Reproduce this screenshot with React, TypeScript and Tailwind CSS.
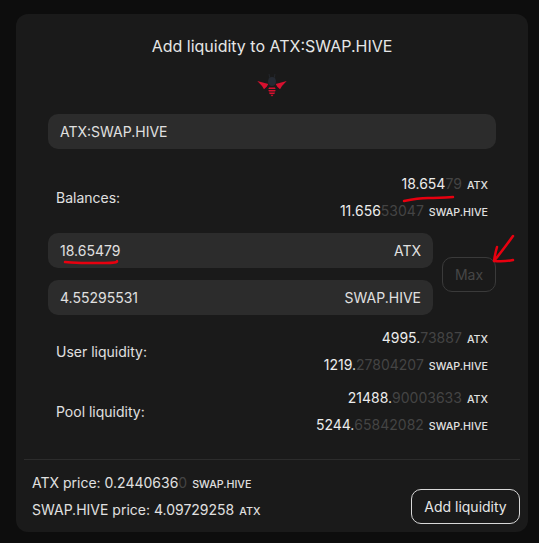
import type { ReactNode } from 'react';

const FONT = "font-['Inter','Noto_Sans',sans-serif]";

function Amount({ strong, faint, token }: { strong: string; faint: string; token: string }) {
  return (
    <div className="flex items-baseline justify-end h-[27px] leading-[27px]">
      <span className="text-[14px] text-[#ececec]">{strong}</span>
      <span className="text-[14px] text-[#444444]">{faint}</span>
      <span className="ml-[5px] text-[10.7px] font-medium text-[#e0e0e0]">{token}</span>
    </div>
  );
}

function StatRow({ label, children, className }: { label: string; children: ReactNode; className?: string }) {
  return (
    <div className={`flex items-center justify-between px-2 ${className ?? ''}`}>
      <span className="text-[14px] text-[#e0e0e0]">{label}</span>
      <div className="flex flex-col">{children}</div>
    </div>
  );
}

function Field({ value, token }: { value: string; token?: string }) {
  return (
    <div className="flex h-[35px] items-center justify-between rounded-[10px] bg-[#2c2c2c] px-3 text-[14px] text-[#e0e0e0]">
      <span>{value}</span>
      {token && <span>{token}</span>}
    </div>
  );
}

function Bee() {
  return (
    <svg width="32" height="27" viewBox="0 0 32 27" className="block">
      <path d="M14 8 L13 3 M18 8 L19 3" stroke="#23262b" strokeWidth="1" />
      <ellipse cx="16" cy="10.5" rx="4" ry="4.5" fill="#252a33" />
      <path d="M1.3 10 L12.3 13 L10.7 15.7 L8 18.3 L6 15 Z" fill="#d8102f" />
      <path d="M30.7 10 L19.7 13 L21.3 15.7 L24 18.3 L26 15 Z" fill="#d8102f" />
      <path d="M13 16.5 H19 L19.6 18 H12.4 Z" fill="#d8102f" />
      <path d="M12.4 19 H19.6 L19.2 20.5 H12.8 Z" fill="#d8102f" />
      <path d="M13 21.5 H19 L18.4 23 H13.6 Z" fill="#d8102f" />
      <path d="M14.5 23.8 H17.5 L16 25.5 Z" fill="#d8102f" />
    </svg>
  );
}

export default function App() {
  return (
    <div className={`relative h-[543px] w-[539px] overflow-hidden bg-[#0d0d0d] pl-4 pr-[11px] pt-[14px] ${FONT}`}>
      <div className="h-[518px] rounded-[12px] bg-[#1a1a1a]">
        <div className="px-8">
          <h1 className="pt-[21px] text-center text-[16px] leading-[22px] text-[#e6e6e6]">
            Add liquidity to ATX:SWAP.HIVE
          </h1>
          <div className="mt-[14px] flex justify-center">
            <Bee />
          </div>
          <div className="mt-[16px]">
            <Field value="ATX:SWAP.HIVE" />
          </div>

          <StatRow label="Balances:" className="mt-[21px]">
            <Amount strong="18.654" faint="79" token="ATX" />
            <Amount strong="11.656" faint="53047" token="SWAP.HIVE" />
          </StatRow>

          <div className="mt-[9px] flex items-center gap-[9px]">
            <div className="flex flex-1 flex-col gap-[12px]">
              <Field value="18.65479" token="ATX" />
              <Field value="4.55295531" token="SWAP.HIVE" />
            </div>
            <button className="h-[35px] w-[54px] rounded-[10px] border border-[#3a3a3a] text-[14px] text-[#464646]">
              Max
            </button>
          </div>

          <StatRow label="User liquidity:" className="mt-[9px]">
            <Amount strong="4995." faint="73887" token="ATX" />
            <Amount strong="1219." faint="27804207" token="SWAP.HIVE" />
          </StatRow>
          <StatRow label="Pool liquidity:" className="mt-[6px]">
            <Amount strong="21488." faint="90003633" token="ATX" />
            <Amount strong="5244." faint="65842082" token="SWAP.HIVE" />
          </StatRow>
        </div>

        <div className="ml-2 mr-[8px] mt-[21px] border-t border-[#2c2c2c] pl-2 pt-[9px]">
          <div className="flex items-end justify-between">
            <div className="text-[14px] text-[#e0e0e0]">
              <div className="flex h-[27px] items-baseline leading-[27px]">
                <span>ATX price: 0.2440636</span>
                <span className="text-[#444444]">0</span>
                <span className="ml-[5px] text-[10.7px] font-medium text-[#e0e0e0]">SWAP.HIVE</span>
              </div>
              <div className="flex h-[27px] items-baseline leading-[27px]">
                <span>SWAP.HIVE price: 4.09729258</span>
                <span className="ml-[5px] text-[10.7px] font-medium text-[#e0e0e0]">ATX</span>
              </div>
            </div>
            <button className="mb-[-1px] h-[35px] w-[109px] rounded-[10px] border border-[#d8d8d8] text-[14px] text-[#e6e6e6]">
              Add liquidity
            </button>
          </div>
        </div>
      </div>

      {/* hand-drawn red marks on top of the screenshot */}
      <svg width="539" height="543" className="pointer-events-none absolute left-0 top-0" fill="none" stroke="#e8000f" strokeLinecap="round" strokeLinejoin="round">
        <path d="M404 201 Q418 198 428 198 T453 197" strokeWidth="2.5" />
        <path d="M65 262 Q78 263 85 263 T105 263 T117 261" strokeWidth="2.5" />
        <path d="M513 236 Q503 250 494 261 Q504 262 513 260 M497 247 Q495 254 494 261" strokeWidth="2.5" />
      </svg>
    </div>
  );
}
